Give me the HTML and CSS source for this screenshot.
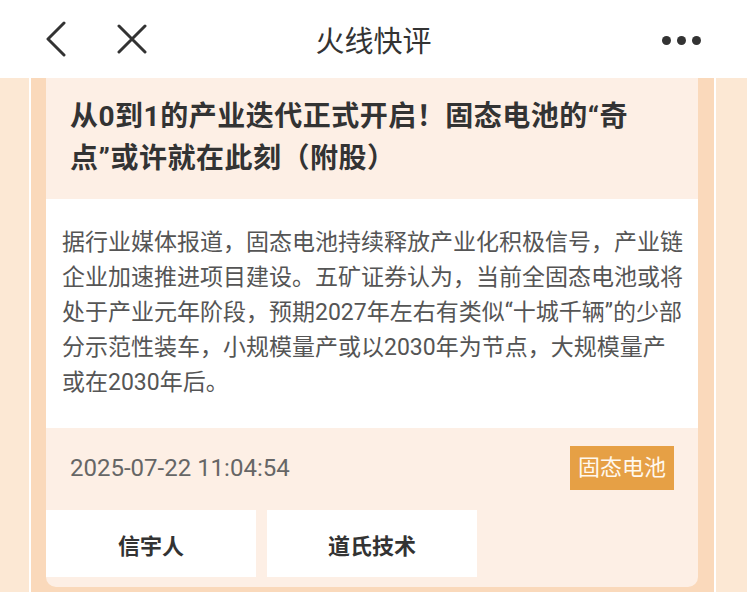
FILE: index.html
```html
<!DOCTYPE html>
<html lang="zh">
<head>
  <meta charset="UTF-8" />
  <meta name="viewport" content="width=device-width, initial-scale=1.0"/>
  <title>火线快评</title>
  <link rel="stylesheet" href="styles.css">
</head>
<body>
<header class="topbar">
  <div class="topbar-left">
    <svg class="icon-back" width="24" height="36" viewBox="0 0 24 36">
      <path d="M20 2 L4 18 L20 34" fill="none" stroke="#333" stroke-width="3" stroke-linecap="round" stroke-linejoin="round"/>
    </svg>
    <svg class="icon-close" width="32" height="30" viewBox="0 0 32 30">
      <path d="M3 2 L29 28 M29 2 L3 28" fill="none" stroke="#333" stroke-width="3" stroke-linecap="round"/>
    </svg>
  </div>
  <h1>火线快评</h1>
  <div class="topbar-right">
    <span class="dot"></span><span class="dot"></span><span class="dot"></span>
  </div>
</header>

<main class="page">
  <article class="card">
    <h2 class="card-title">从0到1的产业迭代正式开启！固态电池的“奇点”或许就在此刻（附股）</h2>
    <p class="card-body">据行业媒体报道，固态电池持续释放产业化积极信号，产业链企业加速推进项目建设。五矿证券认为，当前全固态电池或将处于产业元年阶段，预期2027年左右有类似“十城千辆”的少部分示范性装车，小规模量产或以2030年为节点，大规模量产或在2030年后。</p>
    <div class="card-meta">
      <span class="date">2025-07-22 11:04:54</span>
      <span class="tag">固态电池</span>
    </div>
    <div class="stocks">
      <div class="stock">信宇人</div>
      <div class="stock">道氏技术</div>
    </div>
  </article>
</main>
</body>
</html>
```

FILE: styles.css
```css
body {
  margin: 0;
  background: #fce8d4;
  font-family: Roboto, "Noto Sans CJK SC", sans-serif;
  color: #333;
  height: 592px;
  overflow: hidden;
}
.topbar {
  height: 78px;
  background: #fff;
  display: flex;
  align-items: center;
  justify-content: space-between;
  padding: 0 46px 0 44px;
  position: relative;
}
.topbar h1 {
  position: absolute;
  left: 0;
  right: 0;
  text-align: center;
  margin: 0;
  font-size: 29px;
  font-weight: normal;
  color: #333;
  pointer-events: none;
}
.topbar-left {
  display: flex;
  align-items: center;
  gap: 48px;
}
.topbar-right {
  display: flex;
  gap: 6px;
  margin-top: 2px;
}
.dot {
  width: 9px;
  height: 9px;
  border-radius: 50%;
  background: #333;
}
.page {
  margin: 0 31px 0 29px;
  border-left: 2px solid #fff;
  border-right: 2px solid #fff;
  background: #fad9bb;
  padding: 0 16px 20px 15px;
}
.card {
  background: #fdefe5;
  border-radius: 0 0 10px 10px;
  padding-bottom: 10px;
}
.card-title {
  margin: 0;
  padding: 18px 56px 19px 24px;
  font-size: 28px;
  line-height: 42px;
  font-weight: bold;
  letter-spacing: 0.5px;
  color: #333;
}
.card-body {
  margin: 0;
  background: #fff;
  padding: 26px 12px 28px 16px;
  font-size: 23px;
  line-height: 35px;
  color: #555;
}
.card-meta {
  display: flex;
  align-items: center;
  justify-content: space-between;
  padding: 18px 24px 20px 24px;
}
.date {
  font-size: 24px;
  color: #666;
}
.tag {
  background: #e6a045;
  color: #fff8ee;
  font-size: 22px;
  line-height: 44px;
  padding: 0 8px;
}
.stocks {
  display: flex;
  gap: 11px;
}
.stock {
  width: 210px;
  height: 67px;
  background: #fff;
  display: flex;
  align-items: center;
  justify-content: center;
  font-size: 22px;
  font-weight: bold;
  color: #333;
}
```
